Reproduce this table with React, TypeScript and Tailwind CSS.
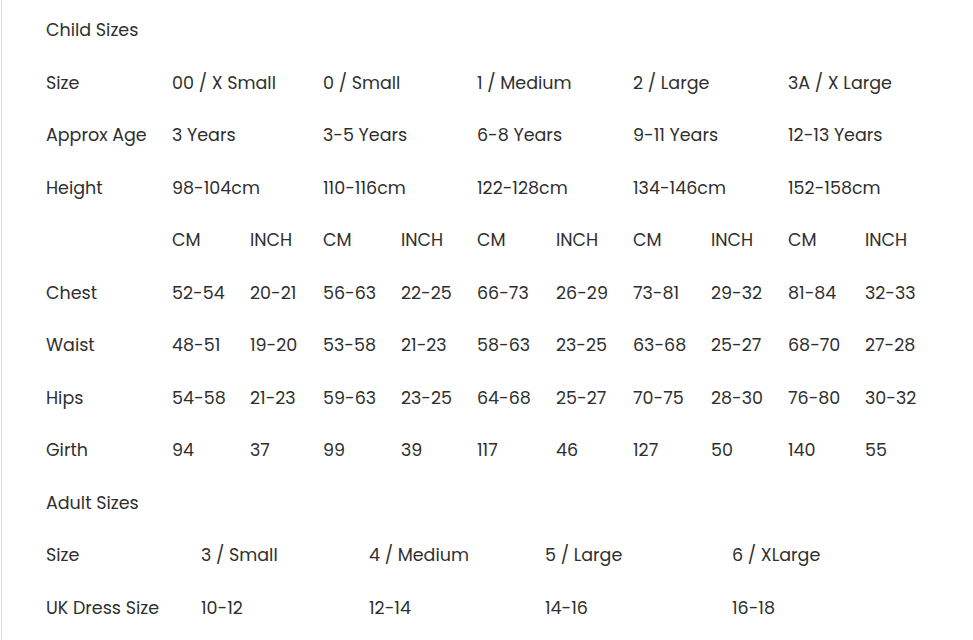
import React from "react";

const childCols = [126, 78, 73, 78, 76, 79, 77, 78, 77, 77, 85];
const adultCols = [155, 168, 176, 187, 238];

const childTop: string[][] = [
  ["Size", "00 / X Small", "0 / Small", "1 / Medium", "2 / Large", "3A / X Large"],
  ["Approx Age", "3 Years", "3-5 Years", "6-8 Years", "9-11 Years", "12-13 Years"],
  ["Height", "98-104cm", "110-116cm", "122-128cm", "134-146cm", "152-158cm"],
];

const childBody: string[][] = [
  ["", "CM", "INCH", "CM", "INCH", "CM", "INCH", "CM", "INCH", "CM", "INCH"],
  ["Chest", "52-54", "20-21", "56-63", "22-25", "66-73", "26-29", "73-81", "29-32", "81-84", "32-33"],
  ["Waist", "48-51", "19-20", "53-58", "21-23", "58-63", "23-25", "63-68", "25-27", "68-70", "27-28"],
  ["Hips", "54-58", "21-23", "59-63", "23-25", "64-68", "25-27", "70-75", "28-30", "76-80", "30-32"],
  ["Girth", "94", "37", "99", "39", "117", "46", "127", "50", "140", "55"],
];

const adultRows: string[][] = [
  ["Size", "3 / Small", "4 / Medium", "5 / Large", "6 / XLarge"],
  ["UK Dress Size", "10-12", "12-14", "14-16", "16-18"],
];

const cell = "px-[10px] align-middle whitespace-nowrap";

export default function App() {
  return (
    <div
      className="min-h-screen bg-white ml-px border-l border-[#dcdcdc] pl-[34px] pt-[4px] text-[17.5px] text-[#2f2f2f]"
      style={{ fontFamily: "Poppins, Inter, 'Liberation Sans', sans-serif" }}
    >
      <table className="table-fixed border-collapse">
        <colgroup>
          {childCols.map((w, i) => (
            <col key={i} style={{ width: w }} />
          ))}
        </colgroup>
        <tbody>
          <tr className="h-[52.5px]">
            <td colSpan={11} className={cell}>Child Sizes</td>
          </tr>
          {childTop.map((row, r) => (
            <tr key={r} className="h-[52.5px]">
              <td className={cell}>{row[0]}</td>
              {row.slice(1).map((v, i) => (
                <td key={i} colSpan={2} className={cell}>{v}</td>
              ))}
            </tr>
          ))}
          {childBody.map((row, r) => (
            <tr key={r} className="h-[52.5px]">
              {row.map((v, i) => (
                <td key={i} className={cell}>{v}</td>
              ))}
            </tr>
          ))}
        </tbody>
      </table>
      <table className="table-fixed border-collapse">
        <colgroup>
          {adultCols.map((w, i) => (
            <col key={i} style={{ width: w }} />
          ))}
        </colgroup>
        <tbody>
          <tr className="h-[52.5px]">
            <td colSpan={5} className={cell}>Adult Sizes</td>
          </tr>
          {adultRows.map((row, r) => (
            <tr key={r} className="h-[52.5px]">
              {row.map((v, i) => (
                <td key={i} className={cell}>{v}</td>
              ))}
            </tr>
          ))}
        </tbody>
      </table>
    </div>
  );
}
